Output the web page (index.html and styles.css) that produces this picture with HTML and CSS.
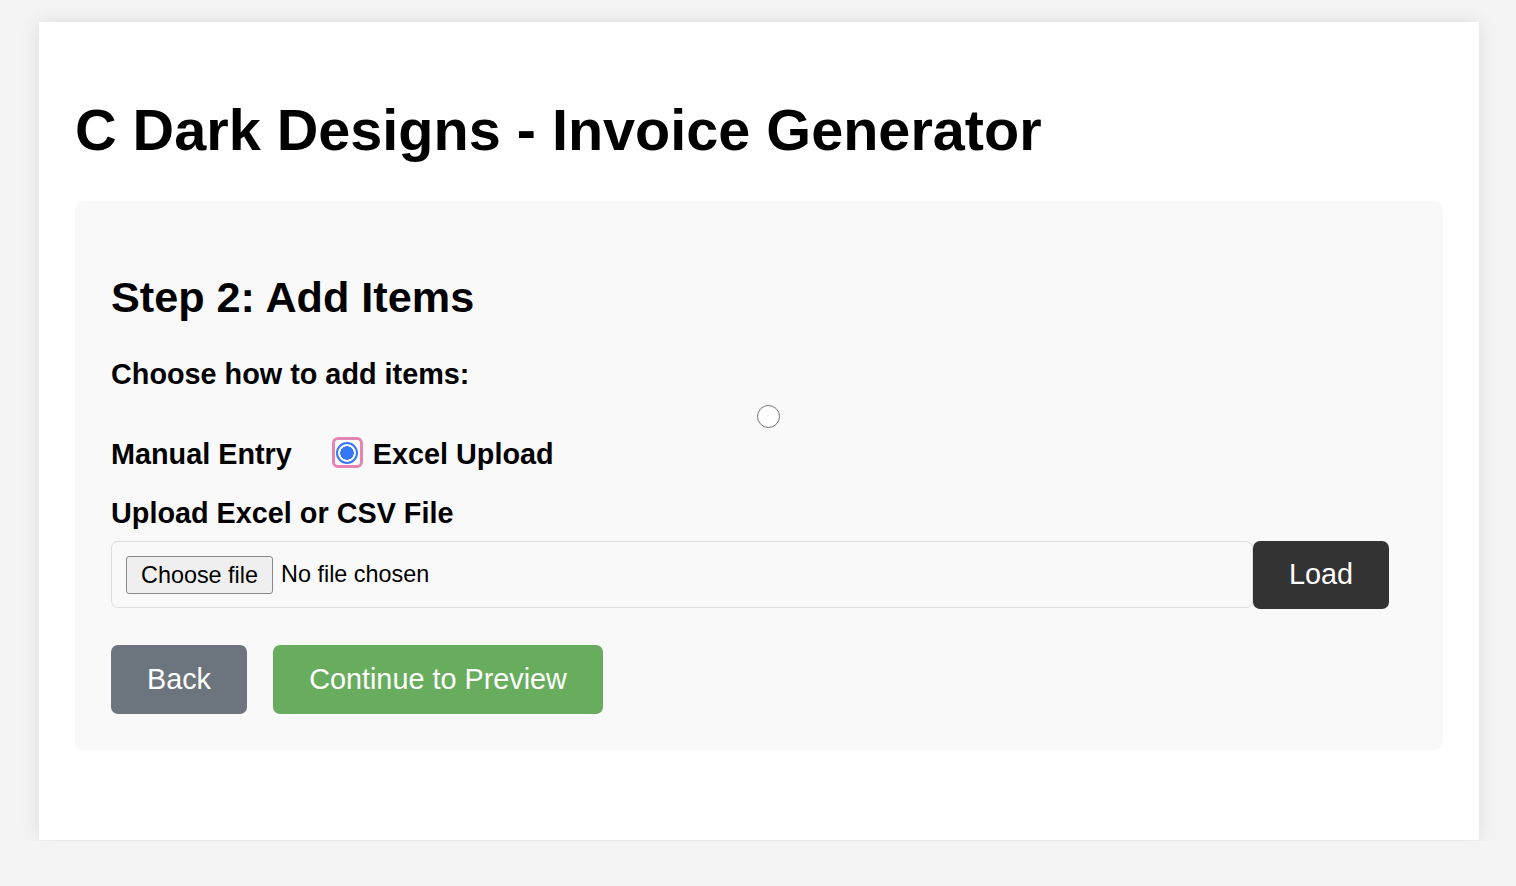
FILE: index.html
```html
<!DOCTYPE html>
<html lang="en">
<head>
<meta charset="utf-8">
<title>C Dark Designs - Invoice Generator</title>
<link rel="stylesheet" href="styles.css">
</head>
<body>
<div class="container">
  <h1 class="title">C Dark Designs - Invoice Generator</h1>
  <section class="step">
    <h2 class="step-title">Step 2: Add Items</h2>
    <div class="field-label">Choose how to add items:</div>
    <div class="radio-wide"><span class="radio"></span></div>
    <div class="radio-row">
      <span class="option-text">Manual Entry</span>
      <span class="radio-focus"><span class="radio checked"></span></span>
      <span class="option-text">Excel Upload</span>
    </div>
    <div class="field-label upload-label">Upload Excel or CSV File</div>
    <div class="file-row">
      <div class="file-box">
        <span class="file-btn">Choose file</span>
        <span class="file-text">No file chosen</span>
      </div>
      <button class="btn btn-dark">Load</button>
    </div>
    <div class="actions">
      <button class="btn btn-gray">Back</button>
      <button class="btn btn-green">Continue to Preview</button>
    </div>
  </section>
</div>
</body>
</html>
```

FILE: styles.css
```css
* { box-sizing: border-box; }

html, body {
  margin: 0;
  padding: 0;
  background: #f4f4f4;
  font-family: "Liberation Sans", Arial, Helvetica, sans-serif;
  color: #000;
}

body {
  padding-left: 2px;
  padding-bottom: 1px;
}

.container {
  width: 1440px;
  margin: 22px auto 0;
  padding: 36px 36px 36px;
  background: #fff;
  box-shadow: 0 0 18px rgba(0, 0, 0, 0.1);
}

.title {
  font-size: 57.6px;
  font-weight: bold;
  margin: 38.6px 0 38.6px;
  line-height: normal;
}

.step {
  background: #f9f9f9;
  border-radius: 9px;
  padding: 36px;
  margin-bottom: 54px;
}

.step-title {
  font-size: 43.2px;
  font-weight: bold;
  margin: 35.9px 0;
  line-height: normal;
}

.field-label {
  display: block;
  font-size: 28.8px;
  font-weight: bold;
  line-height: 33px;
}

.radio-wide {
  width: calc(100% + 18px);
  display: flex;
  justify-content: center;
  margin-top: 14px;
}

.radio {
  display: block;
  width: 23px;
  height: 23px;
  border-radius: 50%;
  border: 1.8px solid #767676;
  background: #fff;
}

.radio.checked {
  border: 2px solid #3478f6;
  background: radial-gradient(circle, #3478f6 0 6.5px, #fff 7px);
  width: 22px;
  height: 22px;
}

.radio-row {
  display: flex;
  align-items: center;
  margin-top: 10px;
  height: 33px;
}

.option-text {
  font-size: 28.8px;
  font-weight: bold;
  line-height: 33px;
}

.radio-focus {
  display: flex;
  align-items: center;
  justify-content: center;
  width: 31px;
  height: 31px;
  margin: -3px 10px 0 40px;
  border: 3px solid #e584b3;
  border-radius: 6px;
  background: #fff;
}

.upload-label {
  margin-top: 26px;
}

.file-row {
  display: flex;
  align-items: center;
  width: 1278px;
  margin-top: 11px;
}

.file-box {
  flex: 1;
  display: flex;
  align-items: center;
  height: 67px;
  padding: 0 14px;
  border: 1px solid #dddddd;
  border-radius: 7px;
  background: #f9f9f9;
  font-size: 23.4px;
}

.file-btn {
  display: block;
  height: 38px;
  line-height: 36px;
  padding: 0 14px;
  border: 1px solid #8a8a8a;
  border-radius: 3px;
  background: #efefef;
  color: #000;
}

.file-text {
  margin-left: 8px;
}

.btn {
  font-family: "Liberation Sans", Arial, Helvetica, sans-serif;
  font-size: 28.8px;
  line-height: 33px;
  padding: 18px 36px;
  border: none;
  border-radius: 7px;
  color: #fff;
  cursor: pointer;
}

.btn-dark {
  background: #333333;
  width: 136px;
  height: 68px;
  padding: 0;
  flex: none;
}

.actions {
  display: flex;
  gap: 26px;
  margin-top: 36.5px;
}

.btn-gray {
  background: #6c757d;
  width: 136px;
  height: 69px;
  padding: 0;
}

.btn-green {
  background: #68ad5e;
  width: 330px;
  height: 69px;
  padding: 0;
}
```
